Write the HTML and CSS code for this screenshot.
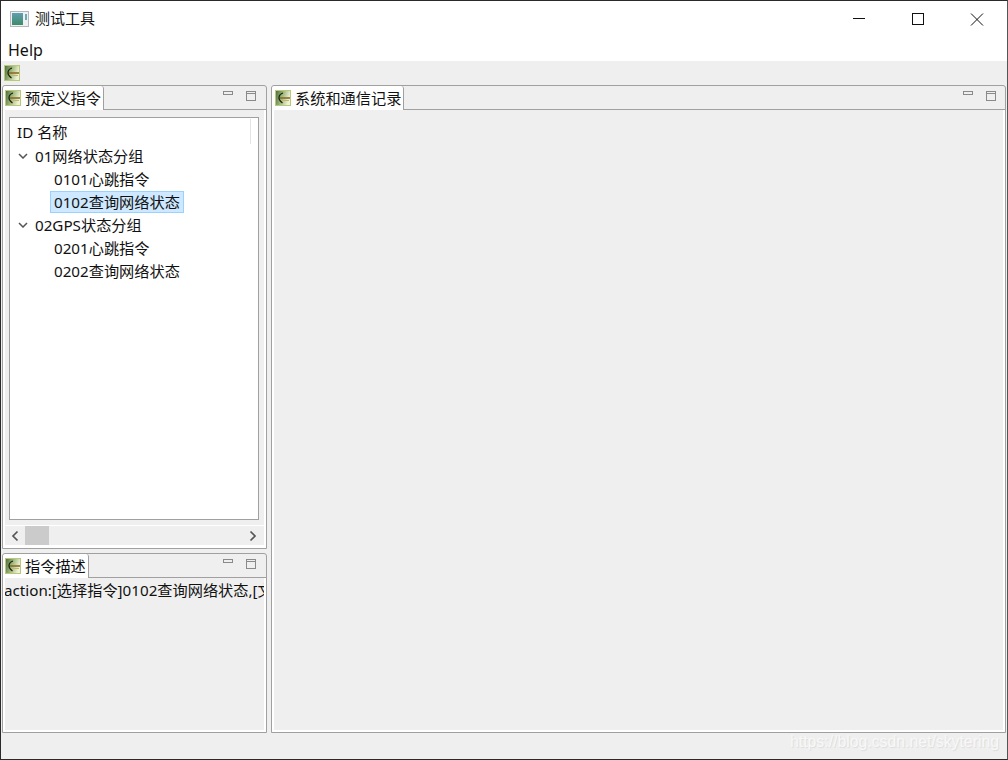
FILE: index.html
```html
<!DOCTYPE html>
<html lang="zh">
<head>
<meta charset="utf-8">
<title>测试工具</title>
<link rel="stylesheet" href="styles.css">
</head>
<body>
<svg class="defs" width="0" height="0" aria-hidden="true">
  <defs>
    <linearGradient id="leaf" x1="0" y1="0" x2="1" y2="0.3">
      <stop offset="0" stop-color="#4a6a38"/>
      <stop offset="0.5" stop-color="#9db47c"/>
      <stop offset="1" stop-color="#eef2d4"/>
    </linearGradient>
    <linearGradient id="app" x1="0" y1="0" x2="0" y2="1">
      <stop offset="0" stop-color="#5f9fb0"/>
      <stop offset="1" stop-color="#3f8a6a"/>
    </linearGradient>
    <symbol id="view" viewBox="0 0 16 16">
      <rect x="0.5" y="0.5" width="15" height="15" fill="url(#leaf)" stroke="#b9c97c"/>
      <path d="M4 8h11" stroke="#8a6e24" stroke-width="1.600"/>
      <path d="M5 10.500h9" stroke="#c4b470" stroke-width="1"/>
      <path d="M8 3Q4.500 4 4 7t3.500 6" fill="none" stroke="#14280c" stroke-width="1.200"/>
    </symbol>
  </defs>
</svg>
<div class="window">
  <header class="titlebar">
    <svg class="app-icon" width="19" height="16" viewBox="0 0 19 16" aria-hidden="true">
      <rect x="0.5" y="0.5" width="18" height="15" fill="#eef0f2" stroke="#b4b8bc"/>
      <rect x="2" y="2" width="11" height="12" fill="url(#app)"/>
      <rect x="15" y="3" width="2" height="6" fill="#6fa8b8"/>
    </svg>
    <span class="title">测试工具</span>
    <div class="win-controls">
      <svg class="win-btn" width="59" height="36" viewBox="0 0 59 36" aria-hidden="true"><path d="M24 17.500h12" stroke="#111" fill="none"/></svg>
      <svg class="win-btn" width="59" height="36" viewBox="0 0 59 36" aria-hidden="true"><rect x="24.500" y="12.500" width="11" height="11" stroke="#111" fill="none"/></svg>
      <svg class="win-btn" width="59" height="36" viewBox="0 0 59 36" aria-hidden="true"><path d="M24 12.500l12 12M36 12.500l-12 12" stroke="#111" fill="none"/></svg>
    </div>
  </header>
  <nav class="menubar"><span>Help</span></nav>
  <div class="toolbar"><svg class="icon" width="16" height="16" aria-hidden="true"><use href="#view"/></svg></div>
  <main class="workbench">
    <div class="left-col">
      <section class="panel panel-tree">
        <div class="tabbar">
          <div class="tab"><svg class="icon" width="16" height="16" aria-hidden="true"><use href="#view"/></svg><span>预定义指令</span></div>
          <div class="view-actions">
            <svg width="10" height="6" viewBox="0 0 10 6" aria-hidden="true"><rect x="0.5" y="0.5" width="9" height="3" fill="none" stroke="#8a8a8a"/></svg>
            <svg width="10" height="10" viewBox="0 0 10 10" aria-hidden="true"><rect x="0.5" y="0.5" width="9" height="9" fill="none" stroke="#8a8a8a"/><path d="M0 2.500h10" stroke="#8a8a8a"/></svg>
          </div>
        </div>
        <div class="panel-body tree-body">
          <div class="tree">
            <div class="tree-head"><span>ID 名称</span><i class="col-rule"></i></div>
            <div class="row lvl1"><svg class="chev" width="10" height="6" viewBox="0 0 10 6" aria-hidden="true"><path d="M1 1l4 4 4-4" fill="none" stroke="#555" stroke-width="1.500"/></svg><span>01网络状态分组</span></div>
            <div class="row lvl2"><span>0101心跳指令</span></div>
            <div class="row lvl2"><span class="selected">0102查询网络状态</span></div>
            <div class="row lvl1"><svg class="chev" width="10" height="6" viewBox="0 0 10 6" aria-hidden="true"><path d="M1 1l4 4 4-4" fill="none" stroke="#555" stroke-width="1.500"/></svg><span>02GPS状态分组</span></div>
            <div class="row lvl2"><span>0201心跳指令</span></div>
            <div class="row lvl2"><span>0202查询网络状态</span></div>
          </div>
          <div class="hscroll">
            <svg width="8" height="12" viewBox="0 0 8 12" aria-hidden="true"><path d="M6.500 1.500 2 6l4.500 4.500" fill="none" stroke="#555" stroke-width="1.700"/></svg>
            <div class="track"><div class="thumb"></div></div>
            <svg width="8" height="12" viewBox="0 0 8 12" aria-hidden="true"><path d="M1.500 1.500 6 6l-4.500 4.500" fill="none" stroke="#555" stroke-width="1.700"/></svg>
          </div>
        </div>
      </section>
      <section class="panel panel-desc">
        <div class="tabbar">
          <div class="tab"><svg class="icon" width="16" height="16" aria-hidden="true"><use href="#view"/></svg><span>指令描述</span></div>
          <div class="view-actions">
            <svg width="10" height="6" viewBox="0 0 10 6" aria-hidden="true"><rect x="0.5" y="0.5" width="9" height="3" fill="none" stroke="#8a8a8a"/></svg>
            <svg width="10" height="10" viewBox="0 0 10 10" aria-hidden="true"><rect x="0.5" y="0.5" width="9" height="9" fill="none" stroke="#8a8a8a"/><path d="M0 2.500h10" stroke="#8a8a8a"/></svg>
          </div>
        </div>
        <div class="panel-body desc-body"><p class="desc">action:[选择指令]0102查询网络状态,[文</p></div>
      </section>
    </div>
    <section class="panel panel-log">
      <div class="tabbar">
        <div class="tab"><svg class="icon" width="16" height="16" aria-hidden="true"><use href="#view"/></svg><span>系统和通信记录</span></div>
        <div class="view-actions">
          <svg width="10" height="6" viewBox="0 0 10 6" aria-hidden="true"><rect x="0.5" y="0.5" width="9" height="3" fill="none" stroke="#8a8a8a"/></svg>
          <svg width="10" height="10" viewBox="0 0 10 10" aria-hidden="true"><rect x="0.5" y="0.5" width="9" height="9" fill="none" stroke="#8a8a8a"/><path d="M0 2.500h10" stroke="#8a8a8a"/></svg>
        </div>
      </div>
      <div class="panel-body"></div>
    </section>
  </main>
  <footer class="statusbar"><span class="watermark">https://blog.csdn.net/skytering</span></footer>
</div>
</body>
</html>
```
FILE: styles.css
```css
* { box-sizing: border-box; }
html, body { margin: 0; padding: 0; }
body {
  width: 1008px;
  height: 760px;
  overflow: hidden;
  font-family: "Noto Sans", "Noto Sans CJK SC", sans-serif;
  font-size: 15.2px;
  color: #111;
}
.defs { display: block; height: 0; }
.window {
  width: 1008px;
  height: 760px;
  display: flex;
  flex-direction: column;
  background: #efefef;
  border: 1px solid #2a2a2a;
  border-right-color: #555;
  overflow: hidden;
}
.titlebar {
  height: 36px;
  flex: none;
  display: flex;
  align-items: center;
  background: #fff;
  padding-left: 9px;
}
.app-icon { flex: none; }
.title { margin-left: 6px; font-size: 15px; margin-bottom: 4px; }
.win-controls { margin-left: auto; margin-right: 1px; display: flex; }
.win-btn { display: block; }
.menubar {
  height: 24px;
  flex: none;
  background: #fff;
  display: flex;
  align-items: center;
  padding: 2px 0 0 7px;
  font-size: 16px;
}
.toolbar {
  height: 24px;
  flex: none;
  display: flex;
  align-items: center;
  padding-left: 3px;
}
.icon { display: block; flex: none; }
.workbench {
  height: 648px;
  flex: none;
  display: flex;
  gap: 4px;
  padding: 0 0 0 1px;
}
.left-col {
  width: 265px;
  flex: none;
  display: flex;
  flex-direction: column;
  gap: 4px;
}
.panel {
  display: flex;
  flex-direction: column;
  border: 1px solid #a0a0a0;
  border-radius: 3px 3px 0 0;
  background: #efefef;
}
.panel-tree { height: 464px; flex: none; }
.panel-desc { height: 180px; flex: none; }
.panel-log { width: 735px; height: 648px; flex: none; }
.tabbar {
  height: 24px;
  flex: none;
  display: flex;
  align-items: stretch;
  justify-content: space-between;
  border-bottom: 1px solid #a0a0a0;
}
.tab {
  display: flex;
  align-items: center;
  gap: 4px;
  padding: 0 2px 2px 2px;
  margin-bottom: -1px;
  background: #fff;
  border-right: 1px solid #a0a0a0;
  border-radius: 3px 3px 0 0;
}
.panel-log .tab { padding-left: 3px; }
.tab .icon { margin-top: 2px; }
.view-actions {
  display: flex;
  align-items: flex-start;
  gap: 13px;
  padding: 5px 10px 0 0;
}
.panel-log .view-actions { padding-right: 9px; }
.panel-body {
  flex: 1;
  min-height: 0;
  border: 2px solid #fff;
  border-top: 0;
  background: #efefef;
  overflow: hidden;
}
.tree-body { display: flex; flex-direction: column; padding: 7px 5px 0 4px; }
.tree {
  flex: 1;
  min-height: 0;
  background: #fff;
  border: 1px solid #a0a0a0;
}
.tree-head {
  height: 25px;
  display: flex;
  align-items: center;
  justify-content: space-between;
  padding: 1px 0 0 7px;
}
.col-rule { width: 1px; height: 25px; background: #e4e4e4; margin-right: 7px; }
.row { height: 23px; display: flex; align-items: center; }
.lvl1 { padding-left: 8px; }
.lvl1 span { margin-left: 7px; }
.lvl1 .chev { margin-top: 2px; }
.lvl2 { padding-left: 44px; }
.selected {
  background: #cde8ff;
  border: 1px solid #99d1ff;
  padding: 0 3px 0 3px;
  margin: 2px 0 0 -4px;
  line-height: 20px;
}
.hscroll {
  height: 21px;
  flex: none;
  display: flex;
  align-items: center;
  gap: 6px;
  margin: 5px -5px 0 -4px;
  padding: 0 7px 0 6px;
  border-top: 1px solid #fff;
  border-bottom: 1px solid #fff;
}
.track { flex: 1; height: 19px; }
.thumb { width: 24px; height: 19px; background: #cbcbcb; }
.desc-body { padding: 0; }
.desc {
  margin: 0 0 0 -1px;
  padding: 0;
  white-space: nowrap;
  overflow: hidden;
}
.statusbar {
  flex: 1;
  min-height: 0;
  display: flex;
  justify-content: flex-end;
  align-items: center;
  padding: 0 8px 9px 0;
}
.watermark {
  font-family: "Liberation Sans", sans-serif;
  font-size: 15.8px;
  color: #f8f8f8;
  text-shadow: 1px 1px 1px #dcdcdc;
}
```
